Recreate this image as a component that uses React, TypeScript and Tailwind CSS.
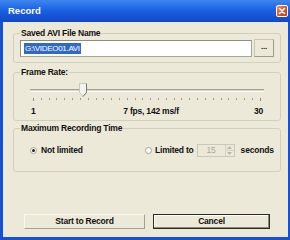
const font = { fontFamily: '"Liberation Sans", Arial, sans-serif' }

const Radio = ({ checked }: { checked: boolean }) => (
    <span className="w-[7px] h-[7px] rounded-full border border-[#A5A396] bg-white flex items-center justify-center shrink-0">
        {checked && <span className="w-[3px] h-[3px] rounded-full bg-[#222]" />}
    </span>
)

const CloseButton = () => (
    <div className="w-[12px] h-[12px] rounded-[2px] border border-white bg-gradient-to-br from-[#F08A6C] via-[#E0532D] to-[#C23A17] flex items-center justify-center">
        <svg width="8" height="8" viewBox="0 0 8 8">
            <path d="M1.5 1.5 L6.5 6.5 M6.5 1.5 L1.5 6.5" stroke="white" strokeWidth="1.6" strokeLinecap="round" />
        </svg>
    </div>
)

export default function App() {
    const ticks = Array.from({ length: 30 }, (_, i) => i)

    return (
        <div className="w-[290px] h-[240px] bg-[#1550D6] flex flex-col" style={font}>
            {/* title bar */}
            <div className="h-[22px] shrink-0 flex items-center justify-between pl-[8px] pr-[2px] bg-gradient-to-b from-[#3D86F0] via-[#1A5EE0] to-[#1148C8]">
                <span className="text-white font-bold text-[9.5px]">Record</span>
                <CloseButton />
            </div>

            <div className="flex-1 bg-[#ECE9D8] ml-[3px] mr-[2px] mb-[3px] flex flex-col pt-[6px] pl-[10px] pr-[7px] text-[8.5px] tracking-[-0.2px] text-[#111] font-bold whitespace-nowrap">
                {/* file name */}
                <fieldset className="border border-[#D0D0BF] rounded-[3px] px-[6px] pb-[5px]">
                    <legend className="px-[1px] leading-[11px]">Saved AVI File Name</legend>
                    <div className="flex items-center gap-[2px]">
                        <div className="flex-1 h-[17px] bg-white border border-[#A7A593] border-t-[#8E8C7C] border-l-[#8E8C7C] flex items-center pl-[3px]">
                            <span className="bg-[#316AC5] text-white font-normal text-[8px] tracking-[-0.3px] leading-[11px] px-[1px]">G:\VIDEO01.AVI</span>
                        </div>
                        <button className="w-[20px] h-[18px] bg-[#ECE9D8] border border-[#C9C6B8] border-b-[#9D9A8A] border-r-[#9D9A8A] text-[8px] leading-none pb-[2px]">...</button>
                    </div>
                </fieldset>

                {/* frame rate */}
                <fieldset className="mt-[4px] border border-[#D0D0BF] rounded-[3px] px-[6px] pb-[3px]">
                    <legend className="px-[1px] leading-[11px]">Frame Rate:</legend>
                    <div className="mx-[10px] mt-[5px] relative h-[14px] flex items-center">
                        <div className="w-full h-[3px] border-t border-[#A3A192] bg-[#DAD7C9] border-b border-b-white" />
                        <svg className="absolute left-[49px] top-[0px]" width="8" height="14" viewBox="0 0 8 14">
                            <path d="M0.5 0.5 H7.5 V9.5 L4 13.5 L0.5 9.5 Z" fill="#F4F3EE" stroke="#C9C7BA" />
                            <path d="M7.5 0.5 V9.5 L4 13.5" fill="none" stroke="#7A786C" />
                        </svg>
                    </div>
                    <div className="mx-[13px] mt-[1px] h-[4px] flex justify-between items-start">
                        {ticks.map((i) => (
                            <span key={i} className={i === 0 || i === 29 ? 'w-[1px] h-[3px] bg-[#8E8C80]' : 'w-[1px] h-[2px] bg-[#A09E92]'} />
                        ))}
                    </div>
                    <div className="mx-[11px] mt-[4px] flex justify-between items-center leading-[11px]">
                        <span className="w-[12px]">1</span>
                        <span className="pl-[8px]">7 fps, 142 ms/f</span>
                        <span className="w-[12px] text-right">30</span>
                    </div>
                </fieldset>

                {/* recording time */}
                <fieldset className="mt-[2px] border border-[#D0D0BF] rounded-[3px] px-[6px] pb-[14px]">
                    <legend className="px-[1px] leading-[11px]">Maximum Recording Time</legend>
                    <div className="ml-[10px] mt-[10px] h-[13px] flex items-center">
                        <Radio checked={true} />
                        <span className="ml-[4px] w-[104px]">Not limited</span>
                        <Radio checked={false} />
                        <span className="ml-[3px] shrink-0">Limited to</span>
                        <div className="ml-[3px] w-[38px] h-[13px] shrink-0 border border-[#C9C7BA] bg-[#ECE9D8] flex items-center">
                            <span className="flex-1 text-center font-normal text-[#A8A698]">15</span>
                            <div className="w-[9px] h-full flex flex-col border-l border-[#D4D1C4]">
                                <div className="flex-1 flex items-center justify-center border-b border-[#D4D1C4]">
                                    <svg width="5" height="3" viewBox="0 0 5 3"><path d="M0 3 L2.5 0 L5 3 Z" fill="#B8B6A8" /></svg>
                                </div>
                                <div className="flex-1 flex items-center justify-center">
                                    <svg width="5" height="3" viewBox="0 0 5 3"><path d="M0 0 L2.5 3 L5 0 Z" fill="#B8B6A8" /></svg>
                                </div>
                            </div>
                        </div>
                        <span className="ml-[6px]">seconds</span>
                    </div>
                </fieldset>

                {/* buttons */}
                <div className="mt-auto mb-[8px] ml-[11px] flex gap-[8px]">
                    <button className="w-[121px] h-[15px] bg-[#ECE9D8] border border-[#F8F7F1] border-r-[#A4A193] border-b-[#A4A193] leading-none">Start to Record</button>
                    <button className="w-[117px] h-[15px] bg-[#ECE9D8] border border-[#2B2A26] shadow-[inset_-1px_-1px_0_#8C8A7E,inset_1px_1px_0_#FFFFFF] leading-none">Cancel</button>
                </div>
            </div>
        </div>
    )
}
